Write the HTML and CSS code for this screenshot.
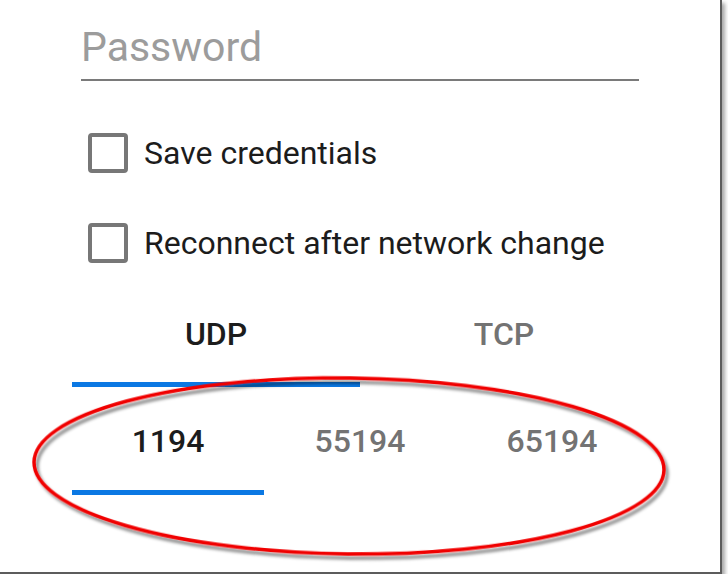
FILE: index.html
```html
<!DOCTYPE html>
<html>
<head>
    <title>VPN Profile</title>
    <meta name="viewport" content="width=device-width, initial-scale=1.0">
    <link rel="stylesheet" href="styles.css">
</head>
<body>
    <div class="screen">
        <div class="form">
            <div class="text-field">
                <input type="password" placeholder="Password">
            </div>

            <label class="check-row first">
                <span class="check-box"></span>
                <span class="check-label">Save credentials</span>
            </label>
            <label class="check-row">
                <span class="check-box"></span>
                <span class="check-label">Reconnect after network change</span>
            </label>

            <div class="tabs protocol">
                <div class="tab active">UDP</div>
                <div class="tab">TCP</div>
            </div>
            <div class="tabs ports">
                <div class="tab active">1194</div>
                <div class="tab">55194</div>
                <div class="tab">65194</div>
            </div>
        </div>

        <svg class="annotation" width="728" height="580" viewBox="0 0 728 580">
            <defs>
                <filter id="shade" x="-10%" y="-10%" width="120%" height="130%">
                    <feDropShadow dx="3" dy="4" stdDeviation="1.6" flood-color="#000" flood-opacity="0.45"/>
                </filter>
            </defs>
            <ellipse cx="349" cy="466" rx="315" ry="88" transform="rotate(0.7 349 466)"
                     fill="none" stroke="#f00000" stroke-width="3.5" filter="url(#shade)"/>
        </svg>
    </div>
</body>
</html>
```

FILE: styles.css
```css
:root {
    --accent: #0b78e3;
    --text: #1c1c1c;
    --muted: #737373;
    --hint: #9c9c9c;
}

* {
    box-sizing: border-box;
}

body {
    margin: 0;
    background: white;
    font-family: Roboto, "Noto Sans", sans-serif;
}

.screen {
    position: relative;
    width: 722px;
    height: 574px;
    background: white;
    border-right: 2px solid #5c5c5c;
    border-bottom: 2px solid #5c5c5c;
    box-shadow: 3px 3px 4px rgba(0,0,0,0.35);
}

.form {
    padding: 0 72px;
}

.text-field {
    margin: 0 9px;
    padding-top: 23px;
    padding-bottom: 7px;
    border-bottom: 2px solid #7a7a7a;
}

.text-field input {
    display: block;
    width: 100%;
    border: none;
    outline: none;
    padding: 0;
    font-family: inherit;
    font-size: 41px;
    line-height: 49px;
    height: 49px;
    color: var(--text);
    background: transparent;
}

.text-field input::placeholder {
    color: var(--hint);
}

.check-row {
    display: flex;
    align-items: center;
    gap: 16px;
    height: 40px;
    margin-top: 50px;
    padding-left: 16px;
    cursor: pointer;
}

.check-row.first {
    margin-top: 52px;
}

.check-box {
    width: 40px;
    height: 40px;
    flex-shrink: 0;
    border: 4px solid #777;
    border-radius: 4px;
}

.check-label {
    font-size: 32px;
    color: var(--text);
}

.tabs {
    display: flex;
}

.protocol {
    margin-top: 16px;
}

.tab {
    flex: 1;
    height: 108px;
    display: flex;
    align-items: center;
    justify-content: center;
    padding-top: 6px;
    font-size: 32px;
    font-weight: 500;
    color: var(--muted);
    border-bottom: 5px solid transparent;
}

.ports .tab {
    padding-top: 5px;
}

.tab.active {
    color: var(--text);
    border-bottom-color: var(--accent);
}

.annotation {
    position: absolute;
    left: 0;
    top: 0;
    pointer-events: none;
}
```
